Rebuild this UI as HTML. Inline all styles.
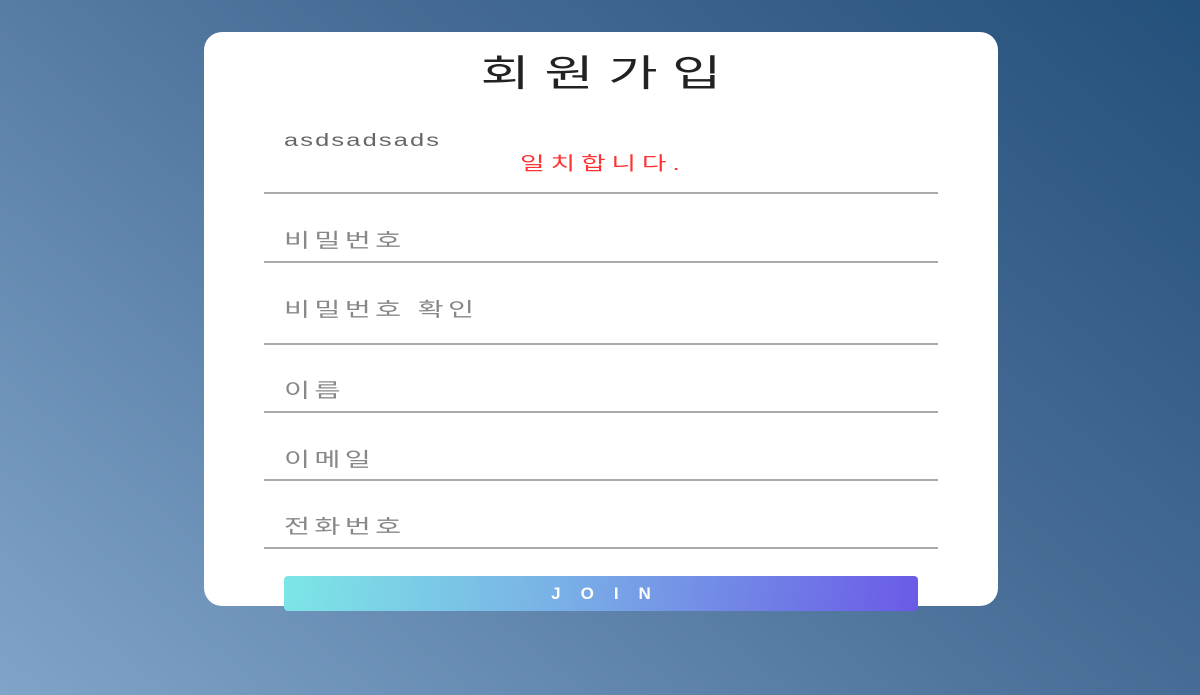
<!DOCTYPE html>
<html><head><meta charset="utf-8"><style>
html,body{margin:0;width:1200px;height:695px;overflow:hidden}
body{background:linear-gradient(220deg,#23507a 0%,#4a6f98 45%,#80a4c9 100%);font-family:"Liberation Sans","Noto Sans CJK KR",sans-serif;position:relative}
.card{position:absolute;left:204px;top:32px;width:794px;height:574px;background:#fff;border-radius:18px}
.t{position:absolute;white-space:nowrap;transform:scaleX(1.45);transform-origin:0 0}
.title{text-align:center;top:55px;font-size:37px;letter-spacing:10px;text-indent:10px;color:#222;line-height:1;transform-origin:50% 0}
.ph{font-size:19.5px;letter-spacing:3px;color:#888;line-height:1}
.line{position:absolute;left:264px;width:674px;height:2px;background:#aaa}
.btn{position:absolute;left:284px;top:576px;width:634px;height:35px;border-radius:4px;background:linear-gradient(100deg,#7ce6e6,#79aee6 45%,#6a5ae6);color:#fff;font-weight:bold;font-size:17px;letter-spacing:20px;text-indent:20px;text-align:center;line-height:35px}
</style></head><body>
<div class="card"></div>
<div class="t title" style="left:204px;width:794px">회원가입</div>
<div class="t" style="left:284px;top:130px;font-size:17.5px;color:#666;letter-spacing:1.5px">asdsadsads</div>
<div class="t" style="left:520px;top:150px;font-size:18.5px;color:#f33;letter-spacing:4px">일치합니다.</div>
<div class="line" style="top:192px"></div>
<div class="t ph" style="left:284px;top:232px">비밀번호</div>
<div class="line" style="top:261px"></div>
<div class="t ph" style="left:284px;top:301px">비밀번호 확인</div>
<div class="line" style="top:343px"></div>
<div class="t ph" style="left:284px;top:382px">이름</div>
<div class="line" style="top:411px"></div>
<div class="t ph" style="left:284px;top:451px">이메일</div>
<div class="line" style="top:479px"></div>
<div class="t ph" style="left:284px;top:518px">전화번호</div>
<div class="line" style="top:547px"></div>
<div class="btn">JOIN</div>
</body></html>
